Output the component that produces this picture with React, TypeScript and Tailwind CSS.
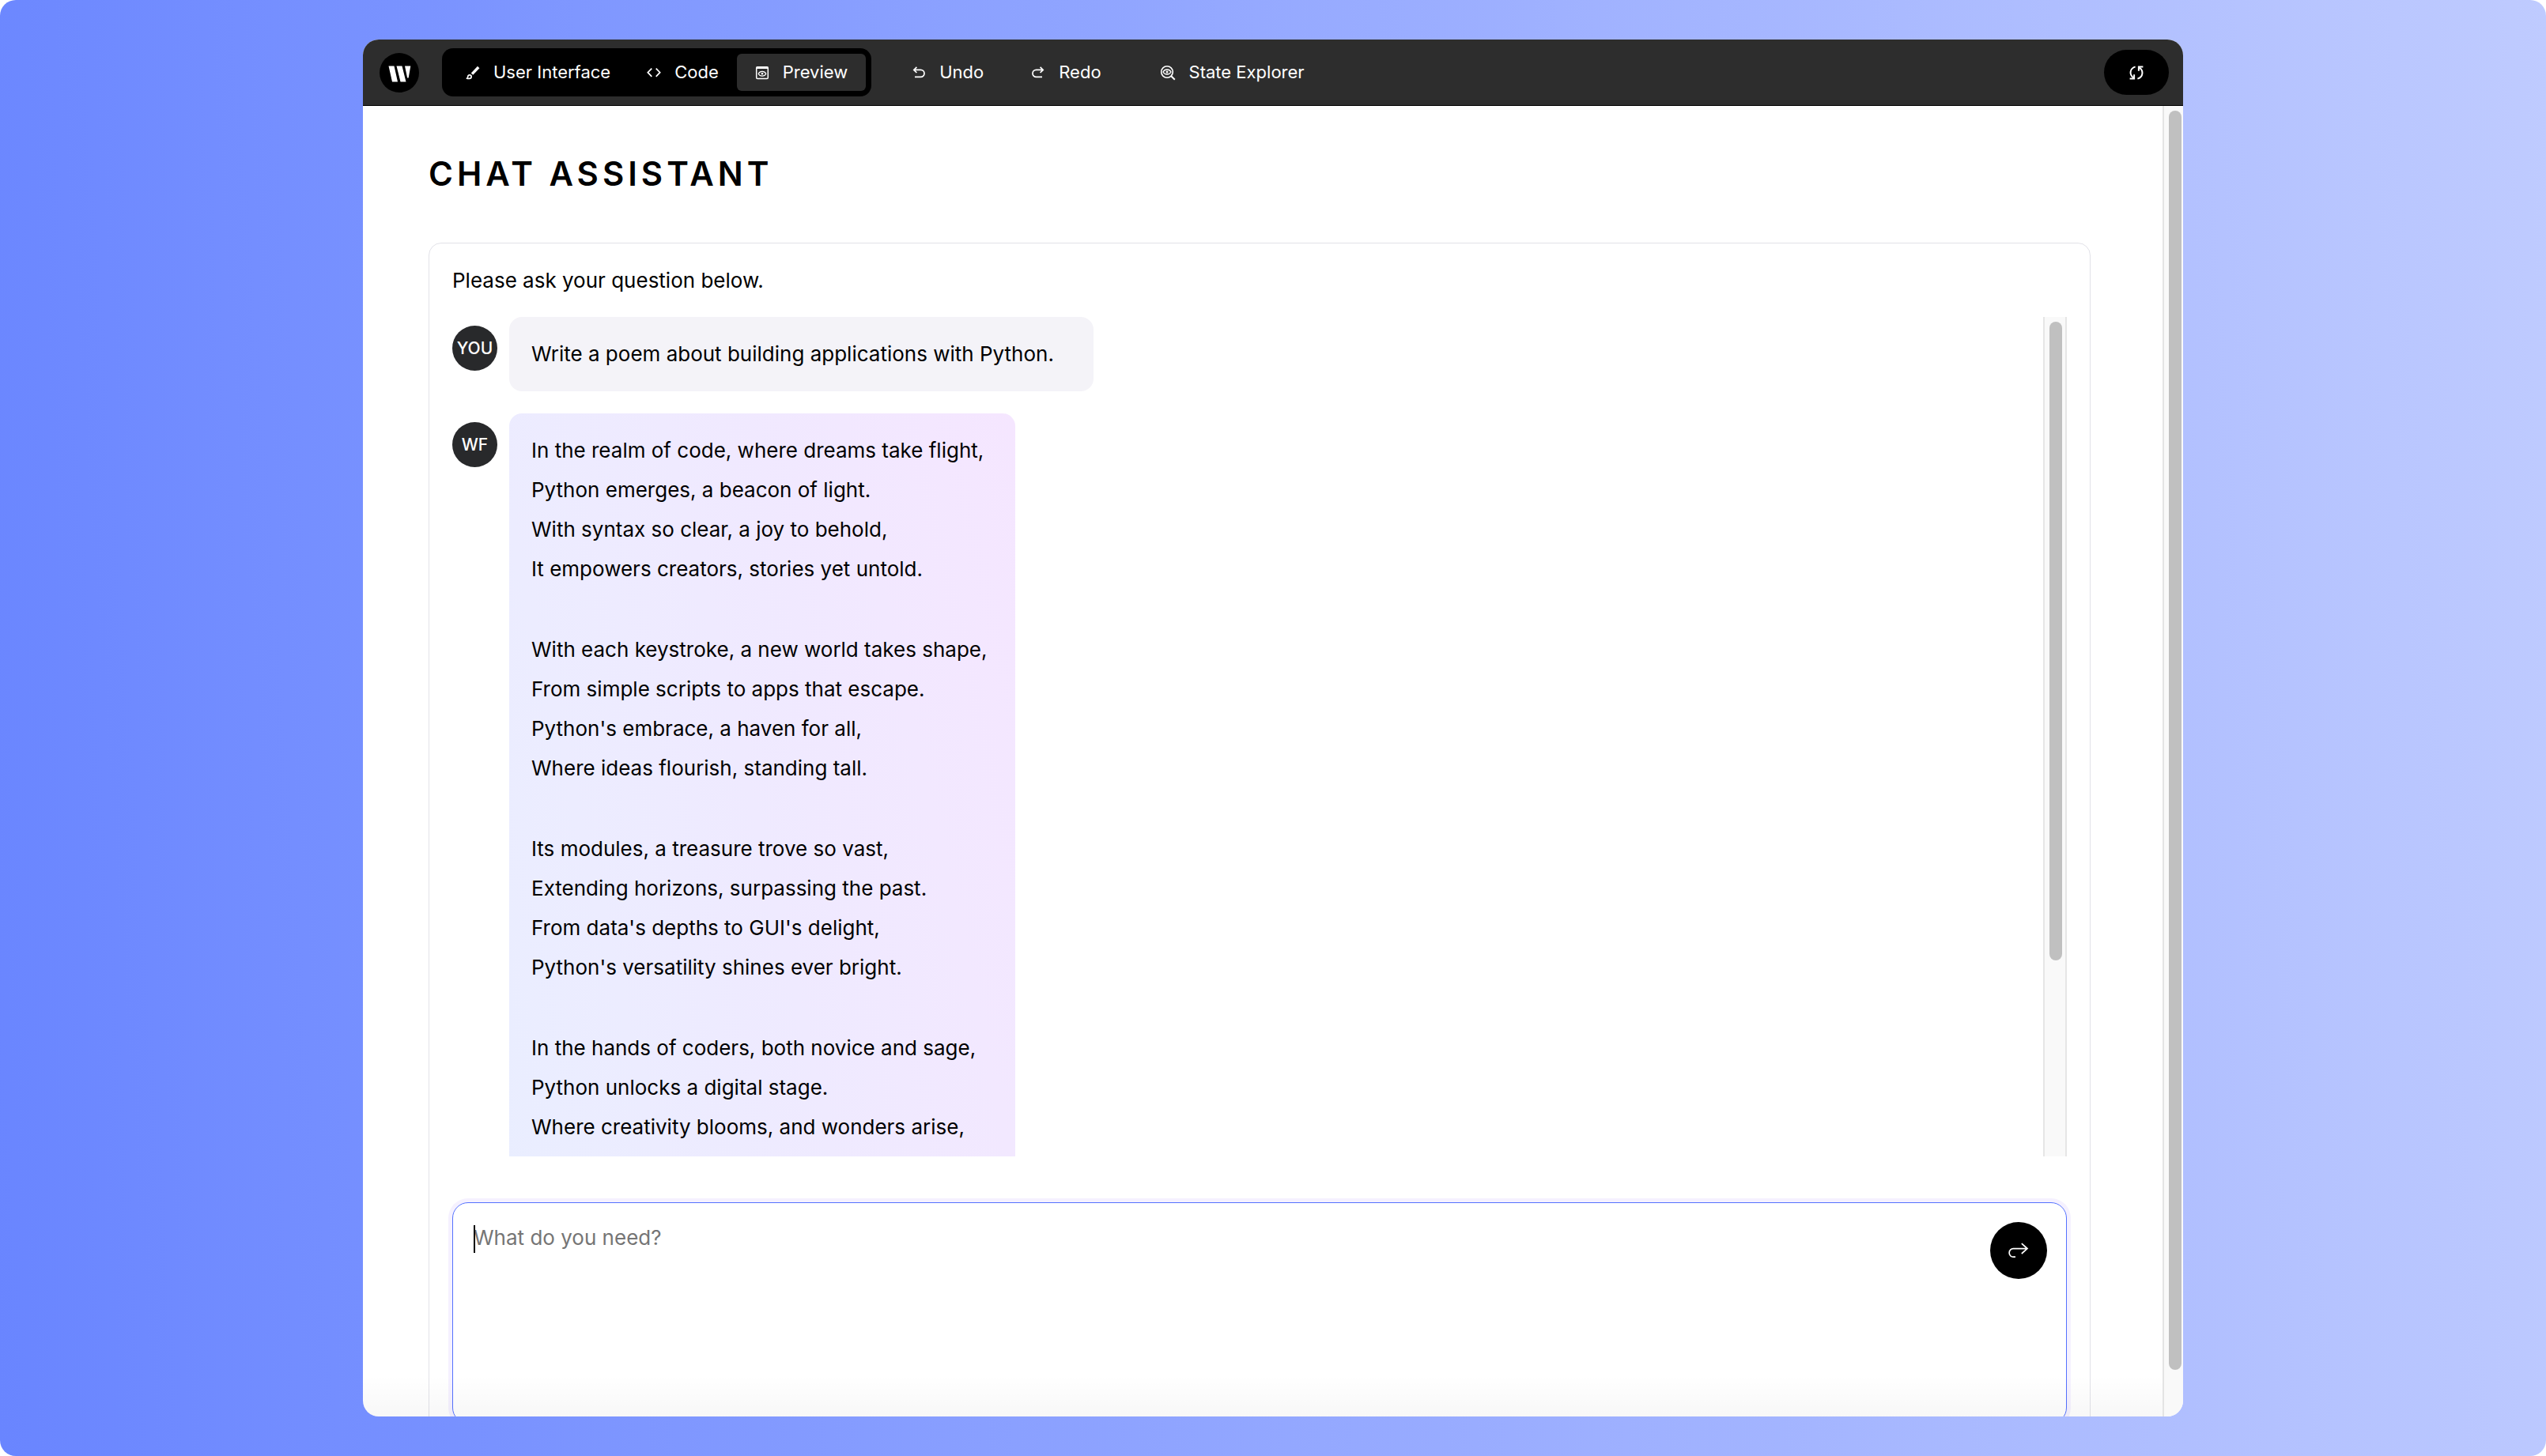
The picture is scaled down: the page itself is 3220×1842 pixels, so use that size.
import type { ReactNode } from 'react';

const stanzas = [
  [
    'In the realm of code, where dreams take flight,',
    'Python emerges, a beacon of light.',
    'With syntax so clear, a joy to behold,',
    'It empowers creators, stories yet untold.',
  ],
  [
    'With each keystroke, a new world takes shape,',
    'From simple scripts to apps that escape.',
    "Python's embrace, a haven for all,",
    'Where ideas flourish, standing tall.',
  ],
  [
    'Its modules, a treasure trove so vast,',
    'Extending horizons, surpassing the past.',
    "From data's depths to GUI's delight,",
    "Python's versatility shines ever bright.",
  ],
  [
    'In the hands of coders, both novice and sage,',
    'Python unlocks a digital stage.',
    'Where creativity blooms, and wonders arise,',
  ],
];

function Logo() {
  return (
    <svg viewBox="0 0 50 50" className="size-[50px] shrink-0" aria-label="Writer">
      <circle cx="25" cy="25" r="25" fill="#000" />
      <path
        fill="#fff"
        d="M11.5 16.5h7l4.5 20h-7zM21.5 16.5h7l5 20h-7zM32 16.5h7.3l-2.6 15h-1.6z"
      />
    </svg>
  );
}

function BrushIcon() {
  return (
    <svg viewBox="0 0 18 18" className="size-[18px]" fill="none" stroke="currentColor">
      <path d="M8 10.6 16.2 2" strokeWidth="3.4" />
      <path
        d="M1.4 16.2c1-.4 1.2-1.3 1.3-2.2.2-1.3 1-2.1 2.2-2.1s2.2.9 2.2 2-1 2.4-2.6 2.5c-1 .1-2 .1-3.1-.2z"
        strokeWidth="1.7"
        strokeLinejoin="round"
      />
    </svg>
  );
}

function CodeIcon() {
  return (
    <svg viewBox="0 0 18 18" className="size-[18px]" fill="none" stroke="currentColor" strokeWidth="1.7">
      <path d="M6.3 3.6 1.3 8.7l5 5.1M11.7 3.6l5 5.1-5 5.1" />
    </svg>
  );
}

function PreviewIcon() {
  return (
    <svg viewBox="0 0 18 18" className="size-[18px]" fill="none" stroke="currentColor" strokeWidth="1.5">
      <rect x="1.7" y="1.7" width="14.6" height="14.9" rx="1.3" />
      <path d="M1.7 2.8h14.6" strokeWidth="2.6" />
      <path d="M4.2 10.3c2-3.8 7.6-3.8 9.6 0-2 3.8-7.6 3.8-9.6 0z" strokeWidth="1.2" />
      <circle cx="9" cy="10.3" r="1.3" fill="currentColor" stroke="none" />
    </svg>
  );
}

function UndoIcon({ flip = false }: { flip?: boolean }) {
  return (
    <svg
      viewBox="0 0 18 18"
      className={flip ? 'size-[18px] -scale-x-100' : 'size-[18px]'}
      fill="none"
      stroke="currentColor"
      strokeWidth="1.7"
    >
      <path d="M6.4 1.8 2.8 5.4 6.4 9M3 5.4h8.5a4.5 4.5 0 0 1 0 9H4" />
    </svg>
  );
}

function StateIcon() {
  return (
    <svg viewBox="0 0 20 20" className="size-5" fill="none" stroke="currentColor" strokeWidth="1.6">
      <circle cx="9" cy="9" r="7.3" />
      <path d="m14.2 14.2 4.6 4.6" strokeWidth="2" />
      <path d="M4 9c2-4 8-4 10 0-2 4-8 4-10 0z" strokeWidth="1.3" />
      <circle cx="9" cy="9" r="1.5" fill="currentColor" stroke="none" />
    </svg>
  );
}

function RefreshIcon() {
  return (
    <svg viewBox="0 0 18 18" className="size-[18px]" fill="none" stroke="currentColor" strokeWidth="2">
      <path d="M7.6 1.4C0 4 0 11.6 5.2 15.5" />
      <path d="M.6 16.4h5.5v-5.2M17.4 1.6h-5.5v5.2" />
      <path d="M10.4 16.6C18 14 18 6.4 12.8 2.500" />
    </svg>
  );
}

function SendIcon() {
  return (
    <svg viewBox="0 0 26 20" className="h-5 w-[26px]" fill="none" stroke="currentColor" strokeWidth="1.7">
      <path d="M16.8 1.2 24 7.600l-7.200 6.400M24 7.600H6.200a5 5 0 0 0-5 5v.6a5 5 0 0 0 5 5H9" />
    </svg>
  );
}

function ToolButton({ icon, active = false, children }: { icon: ReactNode; active?: boolean; children: ReactNode }) {
  return (
    <button
      type="button"
      className={`flex h-[47px] items-center gap-[17px] rounded-md px-[23px] text-[22px] text-white ${
        active ? 'bg-[#2d2d2d]' : ''
      }`}
    >
      {icon}
      {children}
    </button>
  );
}

function Avatar({ children }: { children: ReactNode }) {
  return (
    <div className="mt-[11px] flex size-[57px] shrink-0 items-center justify-center rounded-full bg-[#28292b] text-[21px] font-medium text-white">
      {children}
    </div>
  );
}

export default function App() {
  return (
    <div className="h-screen overflow-hidden rounded-[20px] bg-[linear-gradient(86deg,#6985ff,#bfcbff)] px-[459px] py-[50px] font-['Inter',sans-serif] text-black">
      <div className="flex h-full flex-col overflow-hidden rounded-[20px] bg-white">
        <header className="flex h-[84px] shrink-0 items-center border-b border-black bg-[#2d2d2d] pr-[18px] pl-[21px]">
          <Logo />
          <nav className="ml-[29px] flex h-[61px] items-center rounded-[14px] bg-black px-[7px]">
            <ToolButton icon={<BrushIcon />}>User Interface</ToolButton>
            <ToolButton icon={<CodeIcon />}>Code</ToolButton>
            <ToolButton icon={<PreviewIcon />} active>
              Preview
            </ToolButton>
          </nav>
          <div className="ml-7 flex gap-3.5">
            <ToolButton icon={<UndoIcon />}>Undo</ToolButton>
            <ToolButton icon={<UndoIcon flip />}>Redo</ToolButton>
          </div>
          <div className="ml-7 flex">
            <ToolButton icon={<StateIcon />}>State Explorer</ToolButton>
          </div>
          <button
            type="button"
            aria-label="Refresh"
            className="ml-auto flex h-[57px] w-[82px] items-center justify-center rounded-full bg-black text-white"
          >
            <RefreshIcon />
          </button>
        </header>

        <div className="flex min-h-0 flex-1">
          <main className="relative min-w-0 flex-1 overflow-hidden pt-14 pr-[91px] pl-[83px]">
            <h1 className="mb-[57px] text-[42px] leading-[60px] font-semibold tracking-[5px]">CHAT ASSISTANT</h1>

            <section className="rounded-[16px] border border-[#e2e2e8] px-[29px] pt-[27px] pb-7 text-[26px] leading-10">
              <p className="mb-[26px]">Please ask your question below.</p>

              <div className="flex h-[1062px] overflow-hidden">
                <div className="flex min-w-0 flex-1 flex-col items-start gap-7">
                  <div className="flex gap-[15px]">
                    <Avatar>YOU</Avatar>
                    <div className="min-w-[739px] rounded-[16px] bg-[#f4f3f8] px-7 py-[27px]">
                      Write a poem about building applications with Python.
                    </div>
                  </div>
                  <div className="flex gap-[15px]">
                    <Avatar>WF</Avatar>
                    <div className="flex h-[1100px] min-w-[640px] flex-col gap-[52px] rounded-[16px] bg-[linear-gradient(77deg,#e9eeff,#f5e6ff)] px-7 pt-[22px] leading-[50px]">
                      {stanzas.map((lines) => (
                        <div key={lines[0]}>
                          {lines.map((line) => (
                            <p key={line}>{line}</p>
                          ))}
                        </div>
                      ))}
                    </div>
                  </div>
                </div>
                <div className="w-[30px] shrink-0 border-x-2 border-[#e6e6e6] bg-[#f9f9f9] pt-1.5 pl-1.5">
                  <div className="h-[808px] w-4 rounded-full bg-[#c0c0c0]" />
                </div>
              </div>

              <div className="mt-[58px] flex h-[280px] items-start rounded-[20px] border border-[#5571ff] py-6 pr-6 pl-[26px] ring-5 ring-[#f5f1ff]">
                <div className="relative h-full min-w-0 flex-1">
                  <textarea
                    aria-label="Message"
                    placeholder="What do you need?"
                    className="block size-full resize-none bg-transparent placeholder-[#757575] outline-none"
                  />
                  <span className="absolute top-1 left-0 h-[35px] w-0.5 bg-black" />
                </div>
                <button
                  type="button"
                  aria-label="Send"
                  className="flex size-[72px] shrink-0 items-center justify-center rounded-full bg-black text-white"
                >
                  <SendIcon />
                </button>
              </div>
            </section>
            <div className="pointer-events-none absolute inset-x-0 bottom-0 h-[52px] bg-linear-to-b from-transparent to-black/3" />
          </main>

          <div className="flex w-[26px] shrink-0 flex-col border-l-2 border-[#e4e4e4] bg-[#f9f9f9] pt-1.5 pr-0.5 pb-[59px] pl-1.5">
            <div className="w-4 flex-1 rounded-full bg-[#c0c0c0]" />
          </div>
        </div>
      </div>
    </div>
  );
}
